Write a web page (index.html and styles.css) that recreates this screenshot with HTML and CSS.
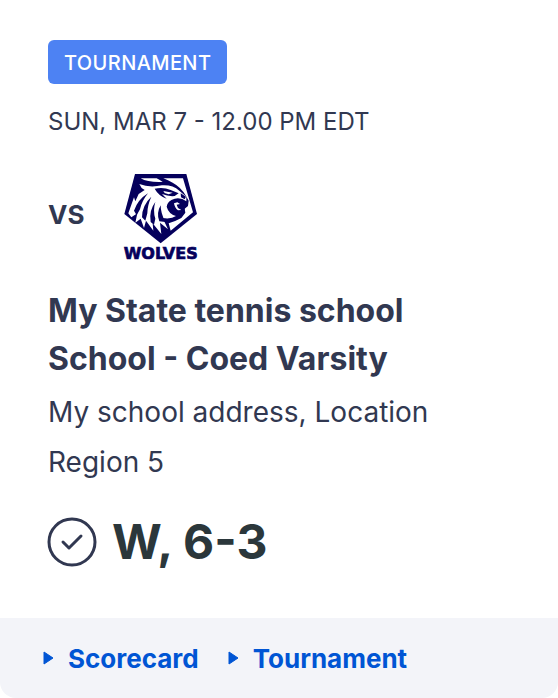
FILE: index.html
```html
<!DOCTYPE html>
<html lang="en">
<head>
<meta charset="utf-8">
<meta name="viewport" content="width=device-width, initial-scale=1">
<title>Match result</title>
<link rel="stylesheet" href="styles.css">
</head>
<body>
<article class="card">
  <div class="card-body">
    <span class="badge">TOURNAMENT</span>
    <p class="date">SUN, MAR 7 - 12.00 PM EDT</p>
    <div class="opponent">
      <span class="versus">VS</span>
      <svg class="logo" viewBox="0 0 252 276" role="img" aria-label="Wolves">
        <path class="ink" d="M45 12H199L231 132L122 220L13 132Z"/>
        <path class="paper" d="M130 25H189L219 127L152 182L146 160Q166 154 184 144L196 128L194 116L204 108L206 92L198 78Q184 52 158 38Q144 30 130 25Z"/>
        <path class="paper" d="M62 25L110 25Q120 30 128 36Q84 38 62 25Z"/>
        <path class="paper" d="M58 42Q88 54 126 46Q158 44 178 62L199 80L199 94Q184 82 164 86Q142 92 140 110Q146 132 168 138Q154 148 128 144L144 178L120 158L124 192L98 160L100 182L78 152L72 174L62 146L46 158L52 130L34 142L25 130L42 82L46 94L56 72L74 60Q62 54 58 42Z"/>
        <path class="ink" d="M104 56Q130 50 152 60L176 70L164 78Q146 80 126 72L140 86Q116 78 104 56ZM182 70L198 80L194 88L183 82ZM42 122Q54 88 84 70Q66 92 60 118L50 136ZM66 142Q66 106 94 80Q82 106 82 130L76 152ZM92 156Q86 122 106 96Q98 122 106 146L102 164ZM118 154Q108 130 122 106Q122 130 136 156Z"/>
        <path class="paper" d="M130 63L158 68L146 73L134 69Z"/>
        <path class="ink" d="M146 110Q146 94 164 90Q188 86 204 104L194 104L190 112L182 104L174 106Q184 118 194 114L190 132L178 137Q154 132 146 110Z"/>
        <path class="paper" d="M162 100L172 97L180 102L170 104L174 114L184 120L174 121Q164 114 162 100Z"/>
        <text class="wordmark" x="122" y="267" text-anchor="middle">WOLVES</text>
      </svg>
    </div>
    <h1 class="title">My State tennis school School - Coed Varsity</h1>
    <p class="place">My school address, Location</p>
    <p class="place">Region 5</p>
    <div class="result">
      <svg class="check" viewBox="0 0 50 50" aria-hidden="true">
        <circle cx="25" cy="25" r="23"/>
        <path d="M16 25L22 31L34 19"/>
      </svg>
      <strong class="score">W, 6-3</strong>
    </div>
  </div>
  <nav class="links">
    <a class="link" href="#scorecard"><svg class="arrow" viewBox="0 0 12 14" aria-hidden="true"><path d="M2 1L11 7L2 13Z"/></svg>Scorecard</a>
    <a class="link" href="#tournament"><svg class="arrow" viewBox="0 0 12 14" aria-hidden="true"><path d="M2 1L11 7L2 13Z"/></svg>Tournament</a>
  </nav>
</article>
</body>
</html>
```
FILE: styles.css
```css
body { margin: 0; background: #fff; font-family: Inter, sans-serif; color: #313851; }
.card { border-radius: 16px; overflow: hidden; background: #fff; }
.card-body { padding: 40px 48px 44px; }
.badge { display: inline-block; padding: 2px 16px 0; border-radius: 6px; background: #4d82f3; color: #fff; font-size: 20px; font-weight: 500; line-height: 42px; letter-spacing: 0.02em; }
.date { margin: 20px 0 0; font-size: 24px; line-height: 36px; }
.opponent { display: flex; align-items: center; gap: 36px; margin-top: 30px; }
.versus { padding-bottom: 4px; font-size: 26px; font-weight: 700; }
.logo { width: 84px; height: 92px; }
.ink { fill: #05005c; }
.paper { fill: #fff; }
.wordmark { fill: #05005c; stroke: #05005c; stroke-width: 2; font-family: "DejaVu Sans", sans-serif; font-size: 48px; font-weight: 700; }
.title { margin: 25px 0 0; font-size: 32px; font-weight: 700; line-height: 48px; }
.place { margin: 5px 0 0; font-size: 28px; line-height: 48px; }
.place + .place { margin-top: 2px; }
.result { display: flex; align-items: center; gap: 15px; margin: 24px 0 0 -1px; }
.check { width: 50px; height: 50px; fill: none; stroke: #313851; stroke-width: 3; stroke-linecap: round; stroke-linejoin: round; }
.score { color: #2b373b; font-size: 48px; line-height: 64px; }
.links { display: flex; gap: 28px; padding: 21px 42px 19px; background: #f3f4f9; }
.link { display: flex; align-items: center; gap: 14px; color: #0055d4; font-size: 26px; font-weight: 700; line-height: 40px; text-decoration: none; }
.arrow { width: 12px; height: 14px; margin-bottom: 2px; fill: currentColor; stroke: currentColor; stroke-width: 1; stroke-linejoin: round; }
```
